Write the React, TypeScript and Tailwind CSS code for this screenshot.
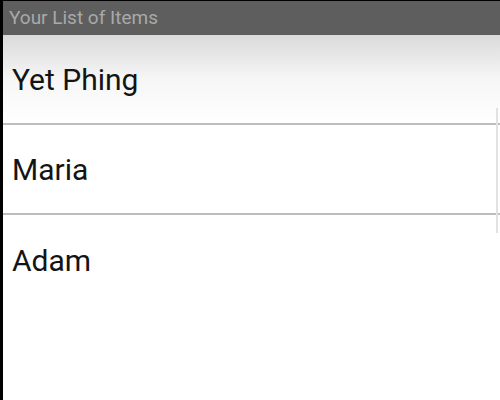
const ITEMS = ['Yet Phing', 'Maria', 'Adam'];

export default function App() {
  return (
    <div
      className="flex h-[400px] w-[500px] flex-col overflow-hidden border-l-[3px] border-t border-black bg-white"
      style={{ fontFamily: 'Roboto, "Liberation Sans", sans-serif' }}
    >
      <div className="flex h-[34px] shrink-0 items-center bg-[#5e5e5e] pl-[6px] text-[19px] text-[#a9a9a9]">
        Your List of Items
      </div>

      <div className="relative flex-1">
        <ul>
          {ITEMS.map((name, i) => (
            <li
              key={name}
              className={
                i === 0
                  ? 'flex h-[90px] items-center border-b-2 border-[#bdbdbd] bg-gradient-to-b from-[#dadada] via-[#f6f6f6] to-white pl-[9px] text-[30px] text-[#141414]'
                  : i < ITEMS.length - 1
                    ? 'flex h-[90px] items-center border-b-2 border-[#bdbdbd] pl-[9px] text-[30px] text-[#141414]'
                    : 'flex h-[90px] items-center pl-[9px] text-[30px] text-[#141414]'
              }
            >
              {name}
            </li>
          ))}
        </ul>
        {/* scrollbar */}
        <div className="absolute right-[2px] top-[73px] h-[125px] w-[2px] bg-[#e2e2e2]" />
      </div>
    </div>
  );
}
